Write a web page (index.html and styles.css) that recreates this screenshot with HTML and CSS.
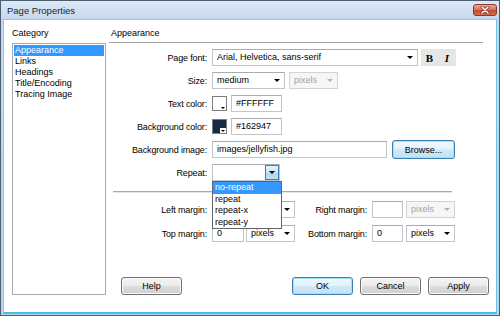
FILE: index.html
```html
<!DOCTYPE html>
<html lang="en">
<head>
  <meta charset="UTF-8">
  <title>Page Properties</title>
  <link rel="stylesheet" href="styles.css">
</head>
<body>

<div class="window">
  <div class="titlebar">
    <span class="title">Page Properties</span>
    <span class="close">
      <svg width="10" height="8" viewBox="0 0 10 8">
        <path d="M2 1 L8 7 M8 1 L2 7" stroke="#7a2b1c" stroke-width="3" stroke-linecap="round"/>
        <path d="M2 1 L8 7 M8 1 L2 7" stroke="#ffffff" stroke-width="1.6" stroke-linecap="round"/>
      </svg>
    </span>
  </div>

  <div class="client">
    <!-- Liste des catégories -->
    <div class="category">
      <div class="heading">Category</div>
      <ul class="list">
        <li class="selected">Appearance</li>
        <li>Links</li>
        <li>Headings</li>
        <li>Title/Encoding</li>
        <li>Tracing Image</li>
      </ul>
    </div>

    <div class="panel">
      <div class="heading rule">Appearance</div>

      <div class="form">
        <div class="row">
          <span class="label">Page font:</span>
          <div class="combo w-font"><span class="text">Arial, Helvetica, sans-serif</span><span class="arrow"></span></div>
          <span class="tool bold">B</span>
          <span class="tool italic">I</span>
        </div>
        <div class="row">
          <span class="label">Size:</span>
          <div class="combo w-size"><span class="text">medium</span><span class="arrow"></span></div>
          <div class="combo disabled w-unit gap4"><span class="text">pixels</span><span class="arrow"></span></div>
        </div>
        <div class="row">
          <span class="label">Text color:</span>
          <span class="swatch"></span>
          <span class="input w-color">#FFFFFF</span>
        </div>
        <div class="row">
          <span class="label">Background color:</span>
          <span class="swatch dark"></span>
          <span class="input w-color">#162947</span>
        </div>
        <div class="row">
          <span class="label">Background image:</span>
          <span class="input w-image">images/jellyfish.jpg</span>
          <span class="button focus browse">Browse...</span>
        </div>
        <div class="row">
          <span class="label">Repeat:</span>
          <div class="combo open w-repeat">
            <span class="text"></span><span class="drop"><span class="arrow"></span></span>
            <!-- Menu déroulant ouvert -->
            <ul class="popup">
              <li class="selected">no-repeat</li>
              <li>repeat</li>
              <li>repeat-x</li>
              <li>repeat-y</li>
            </ul>
          </div>
        </div>
      </div>

      <div class="separator"></div>

      <div class="margins">
        <div class="row">
          <span class="label">Left margin:</span>
          <span class="input w-num"></span>
          <div class="combo w-unit gap2"><span class="text">pixels</span><span class="arrow"></span></div>
          <span class="label2">Right margin:</span>
          <span class="input w-num2"></span>
          <div class="combo disabled w-unit gap3"><span class="text">pixels</span><span class="arrow"></span></div>
        </div>
        <div class="row">
          <span class="label">Top margin:</span>
          <span class="input w-num">0</span>
          <div class="combo w-unit gap2"><span class="text">pixels</span><span class="arrow"></span></div>
          <span class="label2">Bottom margin:</span>
          <span class="input w-num2">0</span>
          <div class="combo w-unit gap3"><span class="text">pixels</span><span class="arrow"></span></div>
        </div>
      </div>

      <div class="buttons">
        <span class="button help">Help</span>
        <span class="spacer"></span>
        <span class="button focus">OK</span>
        <span class="button">Cancel</span>
        <span class="button">Apply</span>
      </div>
    </div>
  </div>
</div>

</body>
</html>
```

FILE: styles.css
```css
body {
  margin: 0;
  font-family: "Liberation Sans", Arial, sans-serif;
  font-size: 9px;
  color: #000;
}
ul {
  list-style: none;
  margin: 0;
  padding: 0;
}
.window {
  width: 500px;
  height: 316px;
  box-sizing: border-box;
  border: 1px solid #4b5d73;
  padding: 0 2px 1px;
  background: linear-gradient(#dce8f5, #c6d9ee 18px, #bcd3ea);
  display: flex;
  flex-direction: column;
}
.titlebar {
  height: 18px;
  flex: none;
  display: flex;
  align-items: center;
  justify-content: space-between;
  padding-left: 4px;
}
.title {
  font-size: 9.5px;
  color: #1b2533;
}
.close {
  width: 24px;
  height: 12px;
  box-sizing: border-box;
  border: 1px solid #8a3a2c;
  border-radius: 3px;
  background: linear-gradient(#e9a896, #d4715b 50%, #c24a30 51%, #d36a4f);
  display: flex;
  align-items: center;
  justify-content: center;
}
.client {
  flex: 1;
  min-height: 0;
  display: flex;
  gap: 3px;
  background: #fff;
  border: 1px solid #a7c1dc;
  border-right-color: #6cc4e8;
  border-bottom: 2px solid #42bfe6;
  padding: 8px 7px 17px 8px;
}
.heading {
  line-height: 11px;
  margin-bottom: 4px;
}
.heading.rule {
  padding: 0 0 3px 2px;
  border-bottom: 1px solid #a4a4a4;
  margin: 0 6px 6px 0;
}
.category {
  width: 94px;
  flex: none;
  display: flex;
  flex-direction: column;
}
.list {
  flex: 1;
  border: 1px solid #a5a9b0;
  padding: 1px 1px 0;
}
.list li {
  line-height: 11px;
  padding-left: 1px;
}
.list li.selected, .popup li.selected {
  background: #3399ff;
  color: #fff;
}
.panel {
  flex: 1;
  display: flex;
  flex-direction: column;
}
.form {
  display: flex;
  flex-direction: column;
  gap: 6px;
}
.row {
  display: flex;
  align-items: center;
  height: 17px;
}
.label, .label2 {
  flex: none;
  text-align: right;
  margin-right: 5px;
  white-space: nowrap;
  letter-spacing: -0.15px;
}
.label { width: 98px; }
.label2 { width: 72px; }
.input, .combo {
  height: 17px;
  box-sizing: border-box;
  border: 1px solid #c2c4c8;
  border-top-color: #a9abb0;
  background: #fff;
  line-height: 15px;
  padding-left: 4px;
  flex: none;
  white-space: nowrap;
  overflow: hidden;
}
.combo {
  position: relative;
  display: flex;
  align-items: center;
  padding-right: 4px;
  overflow: visible;
}
.combo .text {
  flex: 1;
  overflow: hidden;
}
.arrow {
  width: 0;
  height: 0;
  border-left: 3px solid transparent;
  border-right: 3px solid transparent;
  border-top: 3px solid #000;
  flex: none;
}
.combo.disabled {
  color: #a3a3a3;
  background: #f6f6f6;
  border-color: #d3d3d3;
}
.combo.disabled .arrow {
  border-top-color: #b2b2b2;
}
.w-font { width: 206px; }
.w-size { width: 73px; }
.w-unit { width: 49px; }
.w-color { width: 51px; margin-left: 4px; }
.w-image { width: 175px; }
.w-repeat { width: 68px; padding-right: 0; }
.w-num { width: 32px; }
.w-num2 { width: 31px; }
.gap2 { margin-left: 2px; }
.gap3 { margin-left: 3px; }
.gap4 { margin-left: 4px; }
.tool {
  width: 17px;
  height: 17px;
  background: #e6e6e6;
  font-family: "Liberation Serif", "Times New Roman", serif;
  font-weight: bold;
  font-size: 11px;
  display: flex;
  align-items: center;
  justify-content: center;
  flex: none;
}
.tool.bold { margin-left: 3px; }
.tool.italic { width: 18px; font-style: italic; }
.swatch {
  width: 15px;
  height: 15px;
  box-sizing: border-box;
  border: 1px solid #7d7d7d;
  background: #fff;
  position: relative;
  flex: none;
}
.swatch.dark {
  background: #162947;
}
/* petit coin avec la flèche du sélecteur de couleur */
.swatch::after {
  content: "";
  position: absolute;
  right: 0;
  bottom: 0;
  width: 6px;
  height: 5px;
  background: #fff;
}
.swatch::before {
  content: "";
  position: absolute;
  right: 1px;
  bottom: 1px;
  width: 0;
  height: 0;
  border-left: 2px solid transparent;
  border-right: 2px solid transparent;
  border-top: 2px solid #000;
  z-index: 1;
}
.drop {
  width: 14px;
  height: 15px;
  box-sizing: border-box;
  border: 1px solid #3c7fb1;
  background: linear-gradient(#e4f4fc, #c4e5f6 50%, #a6d6f1 51%, #bfe3f5);
  display: flex;
  align-items: center;
  justify-content: center;
  flex: none;
}
.popup {
  position: absolute;
  left: -1px;
  top: 16px;
  width: 68px;
  border: 1px solid #646464;
  background: #fff;
  z-index: 2;
}
.popup li {
  line-height: 11.5px;
  padding-left: 2px;
}
.separator {
  margin: 10px 37px 8px 4px;
  border-top: 1px solid #a9a9a9;
  border-bottom: 1px solid #e4e4e4;
}
.margins {
  display: flex;
  flex-direction: column;
  gap: 7px;
}
.button {
  height: 18px;
  width: 61px;
  box-sizing: border-box;
  border: 1px solid #707070;
  border-radius: 3px;
  background: linear-gradient(#f4f4f4, #ebebeb 48%, #dddddd 52%, #cfcfcf);
  box-shadow: inset 0 0 0 1px #fbfbfb;
  display: flex;
  align-items: center;
  justify-content: center;
  flex: none;
}
.button.focus {
  border-color: #3c7fb1;
  box-shadow: inset 0 0 0 1px #9fe0fb;
  background: linear-gradient(#f0f8fd, #e3f2fb 48%, #cfe8f7 52%, #c2e2f5);
}
.button.browse {
  width: 63px;
  height: 19px;
  margin-left: 5px;
}
.buttons {
  margin-top: auto;
  display: flex;
  gap: 7px;
}
.button.help {
  margin-left: 12px;
}
.spacer {
  flex: 1;
}
```
